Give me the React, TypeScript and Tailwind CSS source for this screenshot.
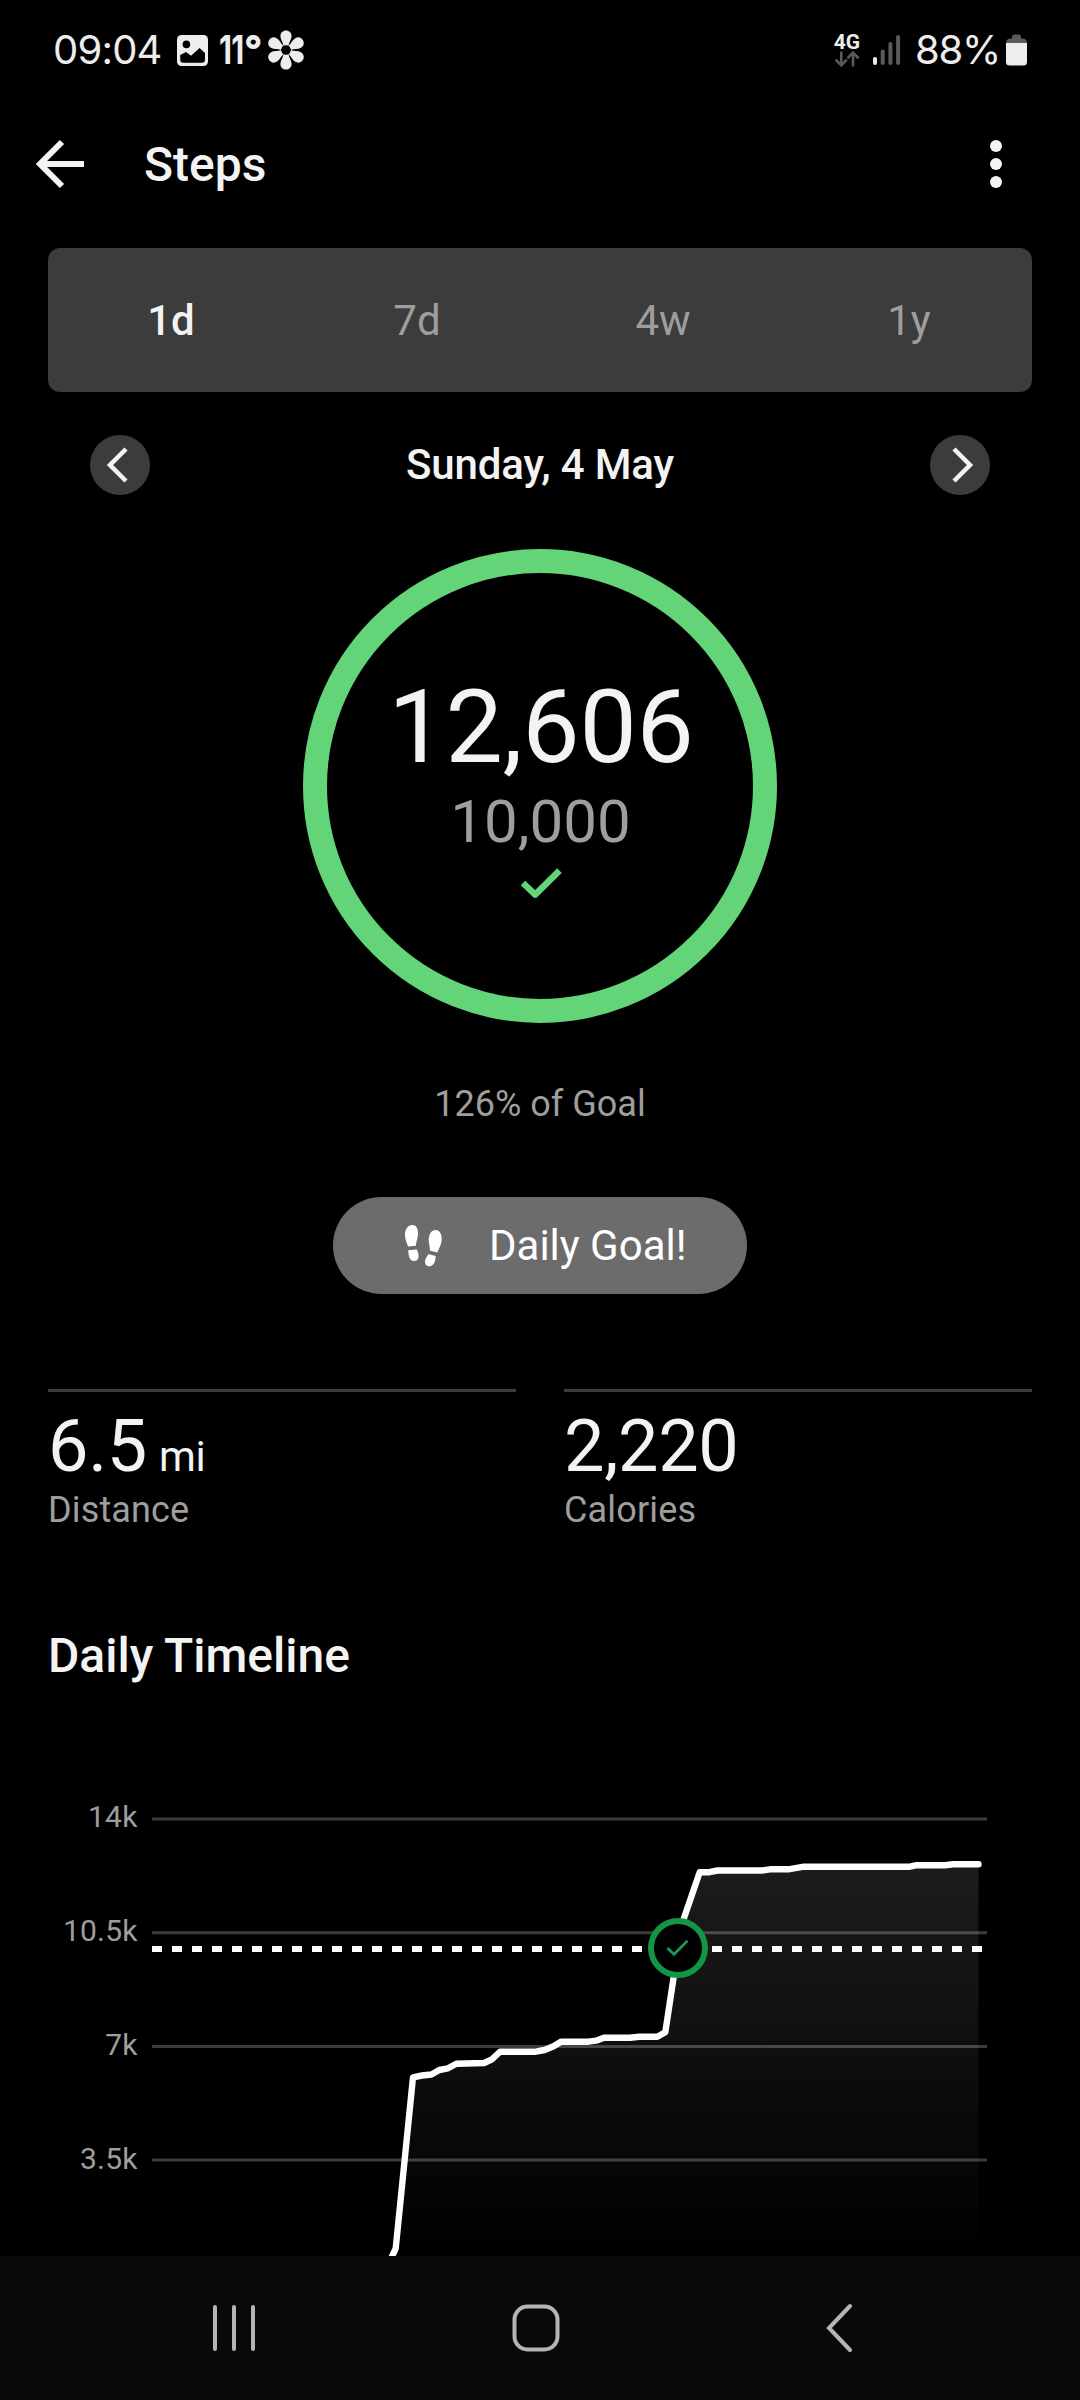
import React from 'react';

const ranges = [
  { label: '1d', active: true },
  { label: '7d', active: false },
  { label: '4w', active: false },
  { label: '1y', active: false },
];

const stats = [
  { value: '6.5', unit: 'mi', label: 'Distance' },
  { value: '2,220', unit: '', label: 'Calories' },
];

const gridLines = [
  { label: '14k', y: 39, textY: 46.7 },
  { label: '10.5k', y: 152.7, textY: 161 },
  { label: '7k', y: 266.5, textY: 275 },
  { label: '3.5k', y: 380, textY: 388.7 },
];

// cumulative steps through the day, in chart pixels
const timeline: [number, number][] = [
  [388, 485], [395.7, 468.5], [413, 297.3], [422, 295.5], [431.4, 294.5], [439.3, 290],
  [448, 288.3], [456.4, 283.7], [484, 283], [492, 279.3], [500, 271.7], [535.7, 271.7],
  [544.6, 270], [553.6, 266.3], [561, 261.7], [588.3, 261.7], [596, 260.7], [604, 257.7],
  [630, 257.7], [639.3, 256.7], [657.3, 256.7], [665.3, 252.3], [674.3, 193], [678, 168],
  [684, 138], [699.7, 92.3], [708.3, 92.3], [717.3, 90.5], [761.7, 90.5], [770, 89.3],
  [788.3, 89.3], [804, 86.7], [910, 86.7], [916.7, 85.2], [945, 85.2], [953, 84.2], [978.5, 84.2],
];

const linePoints = timeline.map((p) => p.join(',')).join(' ');
const areaPoints = `${linePoints} 978.5,494 388,494`;

const StatusBar = () => (
  <div className="flex h-[100px] shrink-0 items-center px-[53px] text-[#ededed] font-[Inter,sans-serif]">
    <span className="w-[124px] text-[40px] leading-none font-normal tracking-[-0.8px] whitespace-nowrap">09:04</span>
    <svg className="h-[31px] w-[31px]" viewBox="0 0 31 31">
      <rect width="31" height="31" rx="4.5" fill="#ededed" />
      <circle cx="9.4" cy="9.4" r="3.8" fill="#000" />
      <path d="M3.2 20 L9 17 L14 20.7 L22.6 13 L28 18 V24.5 Q28 27.7 24.8 27.7 H6.4 Q3.2 27.7 3.2 24.5 Z" fill="#000" />
    </svg>
    <div className="ml-[11px] flex w-[47px] text-[40px] leading-none font-bold whitespace-nowrap">
      <span className="w-[25px] origin-left scale-x-75 tracking-[-1px]">11</span>
      <span className="font-extrabold">°</span>
    </div>
    <svg className="h-[40px] w-[40px]" viewBox="-20 -20 40 40">
      {[0, 60, 120, 180, 240, 300].map((angle) => (
        <path
          key={angle}
          transform={`rotate(${angle})`}
          d="M-2.4 -4 C-3 -8 -5.6 -10.5 -5.6 -14 C-5.6 -17.4 -3 -19.6 0 -19.6 C3 -19.6 5.6 -17.4 5.6 -14 C5.6 -10.5 3 -8 2.4 -4 Z"
          fill="#ededed"
        />
      ))}
      <circle r="4.8" fill="#000" />
    </svg>
    <div className="ml-auto flex items-center">
      <div className="flex h-[34px] w-[28px] flex-col items-center">
        <span className="text-[21px] leading-[18px] font-bold font-[Roboto,sans-serif]">4G</span>
        <svg className="h-[16px] w-[26px]" viewBox="0 0 26 16">
          <path d="M7.3 1.5 V14 M2.5 9.5 L7.3 14.3 L12 9.5 M19 14.5 V2 M14.3 6.5 L19 1.7 L23.8 6.5" fill="none" stroke="#5a5a5a" strokeWidth="2.6" strokeLinecap="round" />
        </svg>
      </div>
      <svg className="ml-[12px] h-[30px] w-[28px]" viewBox="0 0 28 30">
        <rect x="0" y="22" width="4" height="8" rx="2" fill="#ededed" />
        <rect x="7.7" y="14.5" width="4" height="15.5" rx="2" fill="#5a5a5a" />
        <rect x="15.4" y="7" width="4" height="23" rx="2" fill="#5a5a5a" />
        <rect x="23.1" y="0" width="4" height="30" rx="2" fill="#5a5a5a" />
      </svg>
      <span className="ml-[14px] w-[91px] text-[40px] leading-none font-normal tracking-[-1.2px] whitespace-nowrap">88%</span>
      <svg className="h-[32px] w-[21px]" viewBox="0 0 21 32">
        <path d="M6 4.5 V3 Q6 0.5 8 0.5 H13 Q15 0.5 15 3 V4.5 H17 Q21 5 21 9 H0 Q0 5 4 4.5 Z" fill="#5a5a5a" />
        <path d="M0 9 H21 V28 Q21 31.5 17.5 31.5 H3.5 Q0 31.5 0 28 Z" fill="#ededed" />
      </svg>
    </div>
  </div>
);

const Header = () => (
  <header className="flex h-[128px] shrink-0 items-center pr-[78px] pl-[36px]">
    <svg className="h-[50px] w-[50px]" viewBox="0 0 50 50">
      <path d="M26 3 L4 25 L26 47 M4 25 H48" fill="none" stroke="#f3f3f3" strokeWidth="6" />
    </svg>
    <h1 className="ml-[58px] pt-px text-[48px] leading-none font-medium">Steps</h1>
    <div className="ml-auto flex flex-col gap-[6px]">
      <span className="h-3 w-3 rounded-full bg-[#f3f3f3]" />
      <span className="h-3 w-3 rounded-full bg-[#f3f3f3]" />
      <span className="h-3 w-3 rounded-full bg-[#f3f3f3]" />
    </div>
  </header>
);

const RangeTabs = () => (
  <div className="mx-12 mt-5 grid h-36 grid-cols-4 items-center rounded-xl bg-[#3c3c3c] text-center text-[42px]">
    {ranges.map((range) => (
      <span key={range.label} className={range.active ? 'font-medium' : 'text-[#9e9e9e]'}>
        {range.label}
      </span>
    ))}
  </div>
);

const DateRow = () => (
  <div className="mx-[90px] mt-[43px] flex h-[60px] items-center justify-between">
    <button className="h-[60px] w-[60px] rounded-full bg-[#3c3c3c]">
      <svg viewBox="0 0 60 60">
        <path d="M36 14 L20 30 L36 46" fill="none" stroke="#f3f3f3" strokeWidth="4.5" />
      </svg>
    </button>
    <span className="text-[42px] leading-none font-medium tracking-[-0.15px]">Sunday, 4 May</span>
    <button className="h-[60px] w-[60px] rounded-full bg-[#3c3c3c]">
      <svg viewBox="0 0 60 60">
        <path d="M24 14 L40 30 L24 46" fill="none" stroke="#f3f3f3" strokeWidth="4.5" />
      </svg>
    </button>
  </div>
);

const GoalRing = () => (
  <div className="mx-auto mt-[54px] flex h-[474px] w-[474px] flex-col items-center rounded-full border-[24px] border-[#63d478] pt-[103px]">
    <span className="pl-[2px] text-[102px] leading-[102px] tracking-[-0.2px]">12,606</span>
    <span className="mt-2 pl-px text-[60px] leading-[72px] text-[#9e9e9e]">10,000</span>
    <svg className="mt-2 mr-[4px] h-[36px] w-[48px]" viewBox="0 0 48 36">
      <path d="M9 17 L21.2 28.6 L45.5 4.6" fill="none" stroke="#63d478" strokeWidth="6.4" strokeLinejoin="round" />
    </svg>
  </div>
);

const GoalPill = () => (
  <div className="mx-auto mt-[73px] flex h-[97px] w-[414px] items-center rounded-full bg-[#6c6c6c] pl-[71px] text-[42px] text-white">
    <svg className="h-[44px] w-[40px]" viewBox="0 0 40 44" fill="#fff">
      <path d="M8.5 1 C12.5 1 14.2 5 14 10 C13.8 15 12 18 11.8 21.8 L4 22.6 C3.2 19 1 16 1 11 C1 5 4 1 8.5 1 Z" />
      <path d="M4.2 26.2 L13 25.4 C13.8 28 14.8 30 14.6 32.5 C14.3 35.5 12.5 37 10.3 37 C5.5 37 4.6 32 4.2 26.2 Z" />
      <path d="M31.5 6 C36 6 38 10.5 37.7 16 C37.4 21 34.8 24.5 33.4 28.4 L26 26.8 C26.2 23 24.6 19.5 24.7 15.5 C25 10 27.5 6 31.5 6 Z" />
      <path d="M24.4 30 L31.6 32 C31.6 37 30 42.2 25.4 42.2 C22.5 42.2 20.8 40 21 37.4 C21.2 34.6 23.2 32.6 24.4 30 Z" />
    </svg>
    <span className="ml-[45px]">Daily Goal!</span>
  </div>
);

const Stats = () => (
  <div className="mx-12 mt-[95px] grid grid-cols-2 gap-12">
    {stats.map((stat) => (
      <div key={stat.label} className="border-t-[3px] border-[#3c3c3c] pt-[13px]">
        <p className="h-[84px] text-[72px] leading-[84px] tracking-[-0.3px]">
          {stat.value}
          {stat.unit && <span className="ml-[12px] text-[42px] leading-none">{stat.unit}</span>}
        </p>
        <p className="text-[36px] leading-[42px] tracking-[0.15px] text-[#9e9e9e]">{stat.label}</p>
      </div>
    ))}
  </div>
);

const TimelineChart = () => (
  <svg className="mt-24 block h-[476px] w-full" viewBox="0 0 1080 476">
    <defs>
      <linearGradient id="area" gradientUnits="userSpaceOnUse" x1="0" y1="84" x2="0" y2="480">
        <stop offset="0" stopColor="#fff" stopOpacity="0.11" />
        <stop offset="1" stopColor="#fff" stopOpacity="0" />
      </linearGradient>
    </defs>
    {gridLines.map((line) => (
      <g key={line.label}>
        <text x="137.5" y={line.textY} textAnchor="end" fontSize="30" letterSpacing="0.15" fill="#9e9e9e">{line.label}</text>
        <path d={`M152 ${line.y} H987`} stroke="#3c3c3c" strokeWidth="3" />
      </g>
    ))}
    <polygon points={areaPoints} fill="url(#area)" />
    <path d="M152 169 H982" stroke="#fff" strokeWidth="6" strokeDasharray="10 10" />
    <polyline points={linePoints} fill="none" stroke="#fff" strokeWidth="6.4" strokeLinecap="round" strokeLinejoin="round" />
    <circle cx="678" cy="168" r="27" fill="#000" stroke="#129645" strokeWidth="6" />
    <path d="M667.3 168 L674 174.2 L687.5 160.8" fill="none" stroke="#1b9950" strokeWidth="2.8" />
  </svg>
);

const NavBar = () => (
  <nav className="flex h-36 shrink-0 items-center bg-[#090909] pl-[211px]">
    <svg className="h-[48px] w-[46px]" viewBox="0 0 46 48">
      <path d="M4 3 V45 M23 3 V45 M42 3 V45" stroke="#b5b5b5" strokeWidth="4" strokeLinecap="round" />
    </svg>
    <svg className="ml-[255px] h-[48px] w-[48px]" viewBox="0 0 48 48">
      <rect x="2.5" y="2.5" width="43" height="43" rx="13" fill="none" stroke="#b5b5b5" strokeWidth="4" />
    </svg>
    <svg className="ml-[265px] h-[50px] w-[30px]" viewBox="0 0 30 50">
      <path d="M25 3 L4 25 L25 47" fill="none" stroke="#b5b5b5" strokeWidth="4" strokeLinecap="round" />
    </svg>
  </nav>
);

const App = () => {
  return (
    <div className="flex h-[2400px] w-[1080px] flex-col overflow-hidden bg-black text-[#f3f3f3] font-[Roboto,sans-serif]">
      <StatusBar />
      <Header />
      <main className="shrink-0">
        <RangeTabs />
        <DateRow />
        <GoalRing />
        <p className="mt-[61px] text-center text-[36px] leading-10 text-[#9e9e9e]">126% of Goal</p>
        <GoalPill />
        <Stats />
        <h2 className="mx-12 mt-[97px] text-[48px] leading-[56px] font-medium">Daily Timeline</h2>
        <TimelineChart />
      </main>
      <NavBar />
    </div>
  );
};

export default App;
